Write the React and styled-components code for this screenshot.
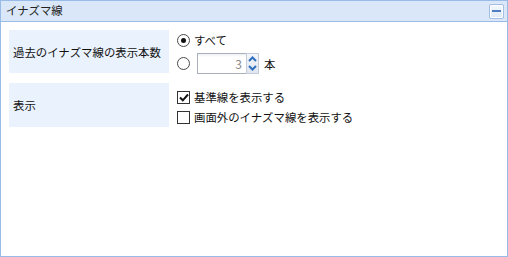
import React from "react";
import styled, { createGlobalStyle } from "styled-components";

const Global = createGlobalStyle`
  html, body { margin: 0; padding: 0; background: #fff; }
  body { font-family: "Noto Sans CJK JP", "Noto Sans", sans-serif; }
`;

const Panel = styled.div`
  width: 508px;
  height: 257px;
  box-sizing: border-box;
  border: 1px solid #99bbe8;
  display: flex;
  flex-direction: column;
  background: #fff;
`;

const Header = styled.div`
  height: 20px;
  border-bottom: 1px solid #99bbe8;
  background: #d9e7f8;
  display: flex;
  align-items: center;
  justify-content: space-between;
  padding: 0 3px 0 5px;
`;

const Title = styled.span`
  font-size: 11.4px;
  color: #222;
  line-height: 1;
`;

const ToolButton = styled.button`
  width: 15px;
  height: 15px;
  padding: 0;
  border: 1px solid #a3bde3;
  border-radius: 2px;
  background: linear-gradient(#f4f8fd, #dfe9f7);
  display: flex;
  align-items: center;
  justify-content: center;
  box-shadow: inset 0 0 0 1px #fff;
`;

const Minus = styled.span`
  width: 9px;
  height: 2px;
  background: #4f7fc1;
`;

const Body = styled.div`
  padding: 8px 8px 0 8px;
`;

const Form = styled.div`
  display: grid;
  grid-template-columns: 160px 1fr;
  column-gap: 8px;
  row-gap: 9px;
`;

const Label = styled.div`
  background: #eaf2fd;
  height: ${(p) => p.h}px;
  display: flex;
  align-items: center;
  padding-left: 4px;
  font-size: 11.4px;
  color: #111;
`;

const Field = styled.div`
  display: flex;
  flex-direction: column;
  gap: ${(p) => p.gap}px;
  padding-top: ${(p) => p.pt}px;
`;

const Option = styled.div`
  display: flex;
  align-items: center;
  font-size: 11.4px;
  color: #111;
  height: ${(p) => p.h || 14}px;
`;

const Radio = styled.span`
  width: 11px;
  height: 11px;
  border: 1px solid #4a4a4a;
  border-radius: 50%;
  box-sizing: content-box;
  display: flex;
  align-items: center;
  justify-content: center;
  margin-right: 4px;
  background: #fff;
  &::after {
    content: "";
    width: 5px;
    height: 5px;
    border-radius: 50%;
    background: ${(p) => (p.checked ? "#111" : "transparent")};
  }
`;

const Check = styled.span`
  width: 11px;
  height: 11px;
  border: 1px solid #333;
  display: flex;
  align-items: center;
  justify-content: center;
  margin-right: 4px;
  background: #fff;
`;

const Spinner = styled.div`
  display: flex;
  align-items: stretch;
  height: 21px;
  margin-left: 3px;
  margin-right: 5px;
`;

const SpinInput = styled.div`
  width: 49px;
  box-sizing: border-box;
  border: 1px solid #a9b0bb;
  border-right: none;
  background: linear-gradient(#eef0f3 0, #fff 3px);
  color: #8a8a8a;
  font-size: 12px;
  display: flex;
  align-items: center;
  justify-content: flex-end;
  padding-right: 4px;
`;

const SpinButtons = styled.div`
  width: 13px;
  display: flex;
  flex-direction: column;
  border: 1px solid #c3ccd8;
  box-sizing: border-box;
  background: linear-gradient(#f3f6fa, #dfe6ef);
`;

const SpinBtn = styled.div`
  flex: 1;
  display: flex;
  align-items: center;
  justify-content: center;
`;

const Unit = styled.span`
  font-size: 11.4px;
  color: #111;
`;

export default function App() {
  return (
    <>
      <Global />
      <Panel>
        <Header>
          <Title>イナズマ線</Title>
          <ToolButton aria-label="collapse">
            <Minus />
          </ToolButton>
        </Header>
        <Body>
          <Form>
            <Label h={43}>過去のイナズマ線の表示本数</Label>
            <Field gap={6} pt={3}>
              <Option h={14}>
                <Radio checked />
                すべて
              </Option>
              <Option h={21}>
                <Radio />
                <Spinner>
                  <SpinInput>3</SpinInput>
                  <SpinButtons>
                    <SpinBtn>
                      <svg width="9" height="6" viewBox="0 0 9 6">
                        <path d="M1 5 L4.5 1.5 L8 5" fill="none" stroke="#2f6fbf" strokeWidth="2" />
                      </svg>
                    </SpinBtn>
                    <SpinBtn>
                      <svg width="9" height="6" viewBox="0 0 9 6">
                        <path d="M1 1 L4.5 4.5 L8 1" fill="none" stroke="#2f6fbf" strokeWidth="2" />
                      </svg>
                    </SpinBtn>
                  </SpinButtons>
                </Spinner>
                <Unit>本</Unit>
              </Option>
            </Field>
            <Label h={44}>表示</Label>
            <Field gap={6} pt={7}>
              <Option h={14}>
                <Check>
                  <svg width="10" height="9" viewBox="0 0 10 9">
                    <path d="M1 4.5 L3.8 7.3 L9 1.5" fill="none" stroke="#111" strokeWidth="2" />
                  </svg>
                </Check>
                基準線を表示する
              </Option>
              <Option h={14}>
                <Check />
                画面外のイナズマ線を表示する
              </Option>
            </Field>
          </Form>
        </Body>
      </Panel>
    </>
  );
}
